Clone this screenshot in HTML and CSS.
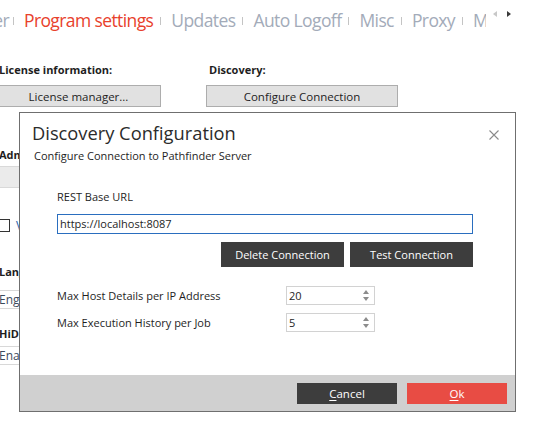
FILE: index.html
```html
<!DOCTYPE html>
<html lang="en">
<head>
    <meta charset="UTF-8">
    <title>Program settings - Discovery Configuration</title>
    <link rel="stylesheet" href="styles.css">
</head>
<body>
    <div class="page">
        <div class="tabbar">
            <div class="tabs-clip">
                <div class="tabs">
                    <span class="tab">Scanner</span><span class="sep"></span>
                    <span class="tab active">Program settings</span><span class="sep"></span>
                    <span class="tab">Updates</span><span class="sep"></span>
                    <span class="tab">Auto Logoff</span><span class="sep"></span>
                    <span class="tab">Misc</span><span class="sep"></span>
                    <span class="tab">Proxy</span><span class="sep"></span>
                    <span class="tab">Mail</span>
                </div>
            </div>
            <div class="tab-scroll">
                <span class="arrow arrow-left"></span>
                <span class="arrow arrow-right"></span>
            </div>
        </div>

        <div class="settings">
            <div class="col col-main">
                <div class="group-label">License information:</div>
                <button class="btn-win">License manager...</button>
                <div class="group-label admin">Administration:</div>
                <div class="combo"></div>
                <div class="check"><span class="check-box"></span><span class="check-text">Verbose logging</span></div>
                <div class="group-label lang">Language:</div>
                <div class="field">English</div>
                <div class="group-label hidpi">HiDPI:</div>
                <div class="field">Enabled</div>
            </div>
            <div class="col col-side">
                <div class="group-label">Discovery:</div>
                <button class="btn-win">Configure Connection</button>
            </div>
        </div>

        <div class="dialog">
            <div class="dlg-head">
                <div>
                    <div class="dlg-title">Discovery Configuration</div>
                    <div class="dlg-sub">Configure Connection to Pathfinder Server</div>
                </div>
                <button class="dlg-close" title="Close">
                    <svg width="10" height="10" viewBox="0 0 10 10"><path d="M0.5 0.5 L9.5 9.5 M9.5 0.5 L0.5 9.5" stroke="#8a8a8a" stroke-width="1.1" fill="none"/></svg>
                </button>
            </div>

            <div class="dlg-body">
                <div class="fld-label">REST Base URL</div>
                <div class="url-input">https://localhost:8087</div>
                <div class="conn-actions">
                    <button class="btn-dark">Delete Connection</button>
                    <button class="btn-dark">Test Connection</button>
                </div>
                <div class="num-row">
                    <span class="num-label">Max Host Details per IP Address</span>
                    <div class="spin">
                        <span>20</span>
                        <span class="spin-arrows"><i class="up"></i><i class="down"></i></span>
                    </div>
                </div>
                <div class="num-row">
                    <span class="num-label">Max Execution History per Job</span>
                    <div class="spin">
                        <span>5</span>
                        <span class="spin-arrows"><i class="up"></i><i class="down"></i></span>
                    </div>
                </div>
            </div>

            <div class="dlg-foot">
                <button class="btn-dark btn-foot"><u>C</u>ancel</button>
                <button class="btn-ok btn-foot"><u>O</u>k</button>
            </div>
        </div>
    </div>
</body>
</html>
```

FILE: styles.css
```css
body {
    margin: 0;
    background: #ffffff;
    font-family: "Open Sans", "Noto Sans", sans-serif;
    color: #1e1e1e;
}

.page {
    position: relative;
    width: 537px;
    height: 435px;
    overflow: hidden;
}

/* tab strip */
.tabbar {
    display: flex;
    height: 40px;
}

.tabs-clip {
    width: 486px;
    flex-shrink: 0;
    overflow: hidden;
}

.tabs {
    display: flex;
    align-items: center;
    height: 28px;
    padding-top: 6px;
    white-space: nowrap;
    margin-left: -63px;
}

.tab {
    font-size: 17.5px;
    letter-spacing: -0.6px;
    line-height: 26px;
    color: #a3abb9;
    padding: 0 7px 0 10px;
}

.tab:first-child {
    padding-right: 4px;
}

.tab.active {
    color: #e8412c;
}

.sep {
    flex-shrink: 0;
    width: 1px;
    height: 8px;
    background: #c4c4c4;
    margin-top: 2px;
}

.tab-scroll {
    display: flex;
    gap: 10px;
    padding: 11px 0 0 7px;
}

.arrow {
    width: 0;
    height: 0;
    border-top: 3.5px solid transparent;
    border-bottom: 3.5px solid transparent;
}

.arrow-left {
    border-right: 4px solid #c8c8c8;
}

.arrow-right {
    border-left: 4px solid #3a3a3a;
}

/* settings behind the dialog */
.settings {
    display: flex;
    gap: 45px;
    margin-left: -4px;
    padding-top: 22px;
}

.col {
    display: flex;
    flex-direction: column;
}

.col-main {
    width: 165px;
}

.col-side {
    width: 192px;
}

.group-label {
    font-size: 11px;
    font-weight: 700;
    line-height: 16px;
    padding-left: 3px;
    margin-bottom: 7px;
}

.btn-win {
    height: 22px;
    border: 1px solid #adadad;
    background: #e1e1e1;
    font-family: inherit;
    font-size: 11.5px;
    color: #1e1e1e;
    padding: 0;
}

.group-label.admin {
    margin-top: 40px;
    margin-bottom: 3px;
}

.combo {
    height: 20px;
    border: 1px solid #d9d9d9;
    background: #ebebeb;
}

.check {
    display: flex;
    align-items: center;
    gap: 6px;
    margin-top: 29px;
}

.check-box {
    width: 11px;
    height: 11px;
    border: 1px solid #333;
    background: #fff;
    margin-left: 1px;
}

.check-text {
    font-size: 12px;
    color: #2b5fa8;
}

.group-label.lang {
    margin-top: 30px;
    margin-bottom: 10px;
}

.group-label.hidpi {
    margin-top: 17px;
    margin-bottom: 4px;
}

.field {
    height: 17px;
    border-top: 1px solid #d8d8d8;
    border-bottom: 1px solid #d8d8d8;
    font-size: 12px;
    line-height: 17px;
    padding-left: 3px;
    color: #3c4a5c;
}

/* modal dialog */
.dialog {
    position: absolute;
    left: 19px;
    top: 112px;
    width: 497px;
    height: 300px;
    box-sizing: border-box;
    border: 1px solid #6f6f6f;
    background: #ffffff;
    display: flex;
    flex-direction: column;
    font-size: 11px;
}

.dlg-head {
    display: flex;
    justify-content: space-between;
    padding: 7px 16px 0 12px;
}

.dlg-title {
    font-size: 18.3px;
    line-height: 26px;
    color: #2b2b2b;
}

.dlg-sub {
    font-size: 11px;
    line-height: 16px;
    margin-left: 2px;
    margin-top: 2px;
}

.dlg-close {
    border: none;
    background: none;
    padding: 0;
    margin-top: 10px;
    height: 10px;
    display: flex;
}

.dlg-body {
    flex: 1;
    padding: 25px 42px 0 37px;
}

.fld-label {
    line-height: 16px;
}

.url-input {
    margin-top: 9px;
    height: 18px;
    border: 1px solid #2a6ebf;
    line-height: 18px;
    padding-left: 2px;
}

.conn-actions {
    display: flex;
    justify-content: flex-end;
    gap: 6px;
    margin-top: 8px;
}

.btn-dark {
    background: #3d3d3d;
    color: #ffffff;
    border: none;
    font-family: inherit;
    font-size: 11px;
    padding: 0;
}

.conn-actions .btn-dark {
    width: 123px;
    height: 25px;
}

.num-row {
    display: flex;
    align-items: center;
    margin-top: 19px;
}

.num-row + .num-row {
    margin-top: 8px;
}

.num-label {
    width: 229px;
}

.spin {
    width: 89px;
    height: 19px;
    box-sizing: border-box;
    border: 1px solid #d2d2d2;
    display: flex;
    align-items: center;
    justify-content: space-between;
    padding: 0 5px 0 2px;
}

.spin-arrows {
    display: flex;
    flex-direction: column;
    gap: 3px;
}

.spin-arrows i {
    width: 0;
    height: 0;
    border-left: 3px solid transparent;
    border-right: 3px solid transparent;
}

.spin-arrows .up {
    border-bottom: 4px solid #8c8c8c;
}

.spin-arrows .down {
    border-top: 4px solid #8c8c8c;
}

.dlg-foot {
    height: 36px;
    background: #d0d0d0;
    display: flex;
    justify-content: flex-end;
    align-items: flex-start;
    gap: 10px;
    padding: 8px 8px 0 0;
    box-sizing: border-box;
}

.btn-foot {
    width: 100px;
    height: 21px;
    font-size: 11.5px;
}

.btn-ok {
    background: #e84c44;
    color: #ffffff;
    border: none;
    font-family: inherit;
    padding: 0;
}

.btn-foot u {
    text-underline-offset: 2px;
}
```
